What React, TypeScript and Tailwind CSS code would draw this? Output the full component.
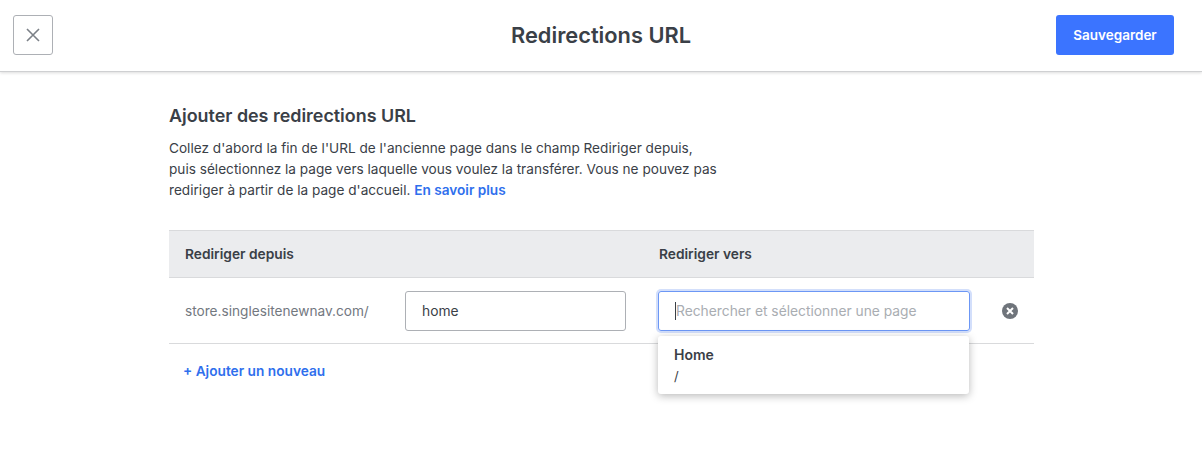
import React from "react";

export default function App() {
  return (
    <div className="h-[451px] w-full overflow-hidden bg-white text-[#3a4047]" style={{ fontFamily: "Inter, 'Liberation Sans', sans-serif" }}>
      <header className="grid h-[72px] grid-cols-[1fr_auto_1fr] items-start border-b border-[#cfd0d2] px-[13px] pt-[15px] shadow-[0_1px_3px_rgba(0,0,0,0.14)]">
        <button className="flex h-[40px] w-[40px] items-center justify-center rounded-[3px] border border-[#adb0b5] bg-white">
          <svg width="14" height="14" viewBox="0 0 14 14" fill="none" stroke="#7b8087" strokeWidth="1.6"><path d="M1 1l12 12M13 1L1 13" /></svg>
        </button>
        <h1 className="text-[21.8px] leading-[40px] font-semibold">Redirections URL</h1>
        <button className="mr-[15px] h-[40px] w-[118px] justify-self-end rounded-[3px] bg-[#3b74ff] text-[13.5px] font-semibold text-white">Sauvegarder</button>
      </header>
      <main className="ml-[169px] w-[865px]">
        <h2 className="mt-[33px] text-[17.9px] leading-[22px] font-semibold">Ajouter des redirections URL</h2>
        <p className="mt-[11px] w-[560px] text-[13.63px] leading-[21px]">
          Collez d'abord la fin de l'URL de l'ancienne page dans le champ Rediriger depuis,<br />
          puis sélectionnez la page vers laquelle vous voulez la transférer. Vous ne pouvez pas<br />
          rediriger à partir de la page d'accueil. <a className="font-semibold text-[#2f6fed]">En savoir plus</a>
        </p>
        <div className="mt-[29px] flex h-[48px] items-center border-y border-[#d9dadc] bg-[#ebecee] pl-[16px] text-[13.75px] font-semibold">
          <span className="w-[474px]">Rediriger depuis</span>
          <span>Rediriger vers</span>
        </div>
        <div className="flex h-[66px] items-center border-b border-[#d9dadc] pl-[16px] text-[13.8px]">
          <span className="w-[220px] pt-[1px] text-[13.65px] text-[#73787f]">store.singlesitenewnav.com/</span>
          <div className="flex h-[40px] w-[221px] items-center rounded-[3px] border border-[#adb0b5] pt-[2px] pl-[16px]">home</div>
          <div className="relative ml-[32px] h-[40px] w-[312px]">
            <div className="flex h-full items-center rounded-[3px] border border-[#6c97f5] pl-[16px] text-[#a9adb2] shadow-[0_0_0_2px_#d3dffb]">
              <span className="h-[18px] w-px bg-[#3a4047]" />
              <span className="pt-[2px]">Rechercher et sélectionner une page</span>
            </div>
            <div className="absolute top-[45px] left-0 h-[58px] w-[311px] rounded-[3px] bg-white pt-[10px] pl-[16px] shadow-[0_2px_8px_rgba(0,0,0,0.28)]">
              <div className="text-[14px] leading-[18px] font-semibold">Home</div>
              <div className="mt-[3px] text-[13px] leading-[18px]">/</div>
            </div>
          </div>
          <svg className="ml-[32px]" width="16" height="16" viewBox="0 0 16 16">
            <circle cx="8" cy="8" r="8" fill="#6f747b" />
            <path d="M5 5l6 6M11 5l-6 6" stroke="#fff" strokeWidth="2" />
          </svg>
        </div>
        <div className="mt-[17px] pl-[14px] text-[13.7px] leading-[20px] font-semibold text-[#2f6fed]">+ Ajouter un nouveau</div>
      </main>
    </div>
  );
}
